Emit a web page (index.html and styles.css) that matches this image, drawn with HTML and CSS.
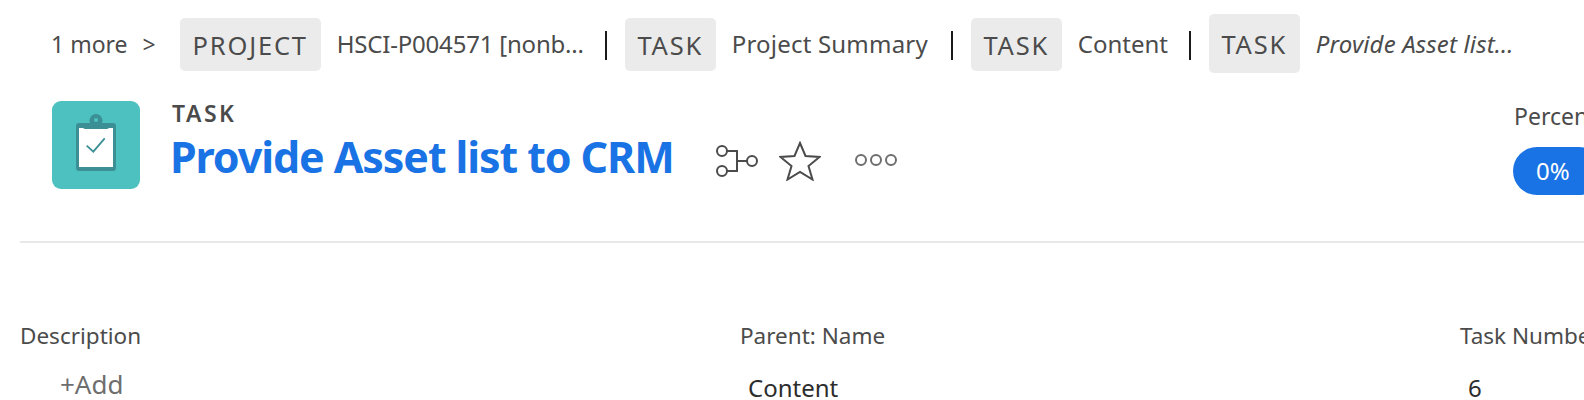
FILE: index.html
```html
<!DOCTYPE html>
<html lang="en">

<head>
    <meta charset="UTF-8">
    <meta name="viewport" content="width=device-width, initial-scale=1.0">
    <title>Provide Asset list to CRM</title>
    <link rel="stylesheet" href="styles.css">
</head>

<body>
    <div class="breadcrumb">
        <span class="crumb-more">1 more</span>
        <span class="crumb-arrow">&gt;</span>
        <span class="chip chip-project">PROJECT</span>
        <span class="crumb-name crumb-hsci">HSCI-P004571 [nonb...</span>
        <span class="crumb-sep"></span>
        <span class="chip chip-task">TASK</span>
        <span class="crumb-name crumb-summary">Project Summary</span>
        <span class="crumb-sep"></span>
        <span class="chip chip-task">TASK</span>
        <span class="crumb-name crumb-content">Content</span>
        <span class="crumb-sep"></span>
        <span class="chip chip-task chip-current">TASK</span>
        <span class="crumb-name crumb-current">Provide Asset list...</span>
    </div>

    <div class="header">
        <div class="task-icon">
            <svg width="88" height="88" viewBox="0 0 88 88">
                <rect x="24" y="22" width="40" height="48" rx="3" fill="#3b8f95" />
                <rect x="27" y="27" width="34" height="39" fill="#fff" />
                <rect x="31" y="22" width="26" height="6" rx="2" fill="#3b8f95" />
                <circle cx="44" cy="19.500" r="6.500" fill="#3b8f95" />
                <circle cx="44" cy="19" r="2" fill="#4cc1c0" />
                <path d="M34.700 44.700 l6.600 6 l11.400 -13.400" fill="none" stroke="#3b8f95" stroke-width="1.800" />
            </svg>
        </div>
        <div class="heading">
            <div class="heading-type">TASK</div>
            <h1>Provide Asset list to CRM</h1>
        </div>
        <div class="actions">
            <svg class="icon-tree" width="44" height="36" viewBox="0 0 44 36">
                <circle cx="7" cy="8" r="5" />
                <circle cx="7" cy="28" r="5" />
                <circle cx="37" cy="18" r="5" />
                <path d="M12 8 h10 v20 h-10 M22 18 h10" />
            </svg>
            <svg class="icon-star" width="42" height="40" viewBox="0 0 42 40">
                <path d="M21 2 l5.500 13 l14 1 l-11 9 l4 13.500 l-12.500 -7.500 l-12.500 7.500 l4 -13.500 l-11 -9 l14 -1 z" />
            </svg>
            <div class="more-dots">
                <span></span><span></span><span></span>
            </div>
        </div>
        <div class="percent">
            <div class="percent-label">Percent Complete</div>
            <div class="percent-pill">0%</div>
        </div>
    </div>

    <div class="fields">
        <div class="field field-description">
            <div class="field-label">Description</div>
            <div class="field-add">+Add</div>
        </div>
        <div class="field field-parent">
            <div class="field-label">Parent: Name</div>
            <div class="field-value">Content</div>
        </div>
        <div class="field field-number">
            <div class="field-label">Task Number</div>
            <div class="field-value">6</div>
        </div>
    </div>
</body>

</html>
```

FILE: styles.css
```css
html,
body {
    margin: 0;
    height: 400px;
    overflow: hidden;
    background-color: #fff;
}

body {
    width: 1584px;
    font-family: "Noto Sans", "Open Sans", sans-serif;
    color: #4b4b4b;
}

.breadcrumb {
    display: flex;
    align-items: center;
    height: 73px;
    padding: 14px 0 0 51px;
    box-sizing: border-box;
    font-size: 23px;
    white-space: nowrap;
}

.crumb-arrow {
    margin-left: 15px;
}

.chip {
    display: flex;
    align-items: center;
    justify-content: center;
    height: 53px;
    margin-top: 2px;
    box-sizing: border-box;
    background-color: #ebebeb;
    border-radius: 5px;
    letter-spacing: 1.800px;
    font-size: 25.500px;
}

.chip-project {
    width: 141px;
    margin-left: 24px;
}

.chip-task {
    width: 91px;
}

.chip-current {
    height: 59px;
    margin-top: 0;
}

.crumb-name {
    margin-left: 16px;
    font-size: 24px;
}

.crumb-hsci {
    width: 249px;
    letter-spacing: -0.200px;
}

.crumb-summary {
    width: 200px;
    letter-spacing: 0.200px;
}

.crumb-content {
    width: 92px;
}

.crumb-sep {
    width: 2px;
    height: 29px;
    margin: 4px 18px 0 19px;
    background-color: #1a1a1a;
}

.crumb-current {
    font-style: italic;
    letter-spacing: 0.150px;
}

.header {
    display: flex;
    height: 170px;
    margin-left: 20px;
    padding: 28px 0 0 32px;
    box-sizing: border-box;
    border-bottom: 2px solid #e8e8e8;
}

.task-icon {
    width: 88px;
    height: 88px;
    flex-shrink: 0;
    border-radius: 9px;
    background-color: #4cc1c0;
}

.task-icon svg {
    display: block;
}

.heading {
    width: 543px;
    margin: -3px 0 0 32px;
    flex-shrink: 0;
}

.heading-type {
    font-size: 23px;
    font-weight: 600;
    letter-spacing: 2.500px;
    line-height: 30px;
}

h1 {
    margin: 0 0 0 -2px;
    font-size: 43px;
    font-weight: 700;
    letter-spacing: -1.100px;
    line-height: 58px;
    color: #1a73e4;
    white-space: nowrap;
}

.actions {
    display: flex;
    align-items: center;
    height: 56px;
    margin-top: 32px;
}

.icon-tree,
.icon-star {
    fill: none;
    stroke: #4b4b4b;
    stroke-width: 2;
}

.icon-star {
    margin-left: 20px;
}

.more-dots {
    display: flex;
    gap: 3px;
    margin: -2px 0 0 34px;
}

.more-dots span {
    width: 12px;
    height: 12px;
    box-sizing: border-box;
    border: 2px solid #6e6e6e;
    border-radius: 50%;
}

.percent {
    margin-left: auto;
    width: 71px;
    flex-shrink: 0;
    overflow: hidden;
    white-space: nowrap;
}

.percent-label {
    margin-left: 1px;
    font-size: 23px;
    line-height: 30px;
}

.percent-pill {
    width: 90px;
    height: 48px;
    margin-top: 16px;
    padding-left: 23px;
    box-sizing: border-box;
    background-color: #1a73e4;
    border-radius: 24px;
    color: #fff;
    font-size: 24px;
    line-height: 48px;
}

.fields {
    display: flex;
    padding: 78px 0 0 20px;
    font-size: 22.500px;
    white-space: nowrap;
}

.field-description,
.field-parent {
    width: 720px;
    flex-shrink: 0;
}

.field-label {
    line-height: 30px;
}

.field-add {
    margin: 18px 0 0 40px;
    font-size: 26px;
    line-height: 30px;
    color: #6e6e6e;
}

.field-value {
    margin: 25px 0 0 8px;
    font-size: 24px;
    line-height: 24px;
    color: #2c2c2c;
}
```
